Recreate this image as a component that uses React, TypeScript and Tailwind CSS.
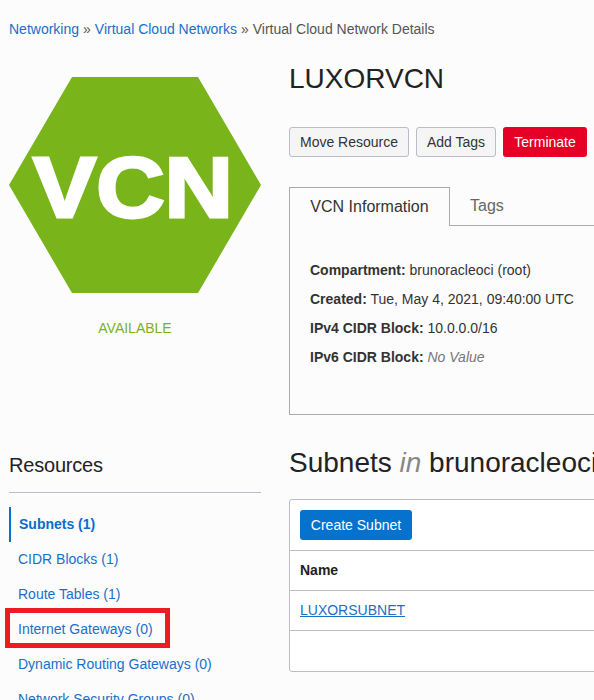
const font = "font-['Liberation_Sans',Arial,sans-serif]";

const resources = ["CIDR Blocks (1)", "Route Tables (1)", "Internet Gateways (0)", "Dynamic Routing Gateways (0)", "Network Security Groups (0)"];

const details = [
  { label: "Compartment:", value: "brunoracleoci (root)" },
  { label: "Created:", value: "Tue, May 4, 2021, 09:40:00 UTC" },
  { label: "IPv4 CIDR Block:", value: "10.0.0.0/16" },
];

function Badge() {
  return (
    <svg width="252" height="216" viewBox="0 0 252 216" className="block">
      <polygon points="63,0 189,0 252,108 189,216 63,216 0,108" fill="#78b41a" />
      <text x="24" y="140" fontFamily="'Liberation Sans', Arial, sans-serif" fontWeight="700" fontSize="86" fill="#fff" stroke="#fff" strokeWidth="3" textLength="200" lengthAdjust="spacingAndGlyphs">
        VCN
      </text>
    </svg>
  );
}

export default function App() {
  return (
    <div className={`h-[700px] w-[594px] overflow-hidden bg-[#fcfcfc] text-sm text-[#333] ${font}`}>
      <div className="flex h-[58px] items-center pl-[9px] text-[#555]">
        <a className="text-[#1a6fc9]">Networking</a>
        <span className="mx-1">»</span>
        <a className="text-[#1a6fc9]">Virtual Cloud Networks</a>
        <span className="mx-1">»</span>
        <span>Virtual Cloud Network Details</span>
      </div>

      <div className="flex gap-7 pl-[9px]">
        <div className="w-[252px] shrink-0">
          <div className="pt-[19px]">
            <Badge />
          </div>
          <p className="mt-[25px] text-center leading-5 text-[#78b41a]">AVAILABLE</p>

          <h2 className="mt-[113px] text-xl leading-7 tracking-[-0.2px] text-[#222]">Resources</h2>
          <ul className="mt-[13px] border-t border-[#b8bdc6] pt-[14px] text-[#1a6fc9]">
            <li className="flex h-[35px] items-center border-l-2 border-[#0572ce] pb-0.5 pl-2 font-bold text-[#0a6ccb]">Subnets (1)</li>
            {resources.map((name) => (
              <li key={name} className="relative flex h-[35px] items-center whitespace-nowrap pb-0.5 pl-[9px]">
                {name}
                {name.startsWith("Internet") && (
                  <span className="absolute top-[-4px] left-[-4px] h-[40px] w-[165px] border-[5px] border-[#ed1c24]" />
                )}
              </li>
            ))}
          </ul>
        </div>

        <div className="w-[400px] shrink-0">
          <h1 className="mt-[1px] text-[28px] leading-10 text-[#222]">LUXORVCN</h1>

          <div className="mt-[28px] flex gap-[7px]">
            <button className="h-[30px] w-[120px] rounded-[3px] border border-[#b8bdc6] bg-[#f5f5f6] text-[#333]">Move Resource</button>
            <button className="h-[30px] w-[80px] rounded-[3px] border border-[#b8bdc6] bg-[#f5f5f6] text-[#333]">Add Tags</button>
            <button className="h-[30px] w-[84px] rounded-[3px] bg-[#e60026] text-white">Terminate</button>
          </div>

          <div className="mt-[30px] flex h-[39px]">
            <div className="flex w-[161px] items-center justify-center border border-b-0 border-[#aaa] text-base text-[#333]">VCN Information</div>
            <div className="flex-1 border-b border-[#aaa] pt-[7px] pl-5 text-base text-[#666]">Tags</div>
          </div>
          <div className="h-[189px] border-x border-b border-[#aaa] pt-[30px] pl-5">
            {details.map((row) => (
              <p key={row.label} className="h-[29px] leading-[29px] whitespace-nowrap">
                <b>{row.label}</b> {row.value}
              </p>
            ))}
            <p className="h-[29px] leading-[29px]">
              <b>IPv6 CIDR Block:</b> <i className="text-[#777]">No Value</i>
            </p>
          </div>

          <h2 className="mt-[28px] text-[28px] leading-10 whitespace-nowrap text-[#222]">
            Subnets <i className="text-[#888]">in</i> brunoracleoci
          </h2>

          <div className="mt-4 rounded-[3px] border border-[#b8bdc6] bg-white">
            <div className="h-[51px] border-b border-[#b8bdc6] pt-[10px] pl-[10px]">
              <button className="h-[30px] w-[112px] rounded-[3px] bg-[#0572ce] text-white">Create Subnet</button>
            </div>
            <div className="flex h-[40px] items-center border-b border-[#b8bdc6] pb-0.5 pl-[10px] font-bold text-[#222]">Name</div>
            <div className="flex h-[40px] items-center border-b border-[#b8bdc6] pb-0.5 pl-[10px]">
              <a className="text-[#1a6fc9] underline">LUXORSUBNET</a>
            </div>
            <div className="h-[40px]" />
          </div>
        </div>
      </div>
    </div>
  );
}
